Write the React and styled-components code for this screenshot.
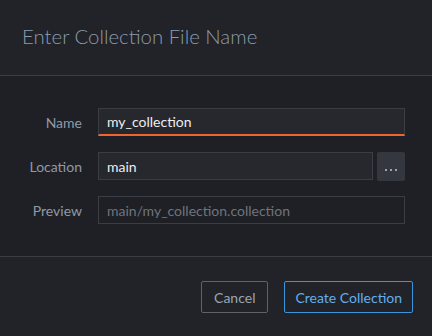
import React from "react";
import styled, { createGlobalStyle } from "styled-components";

const Global = createGlobalStyle`
  html, body { margin: 0; padding: 0; background: #1e2025; }
  body { font-family: Lato, "Noto Sans", sans-serif; }
  * { box-sizing: border-box; }
`;

const Dialog = styled.div`
  width: 432px;
  height: 336px;
  display: flex;
  flex-direction: column;
  background: #1e2025;
`;

const Header = styled.div`
  height: 76px;
  background: #212328;
  border-bottom: 1px solid #3a3d43;
  display: flex;
  align-items: center;
  padding: 0 22px;
  padding-bottom: 3px;
`;

const Title = styled.h1`
  margin: 0;
  font-weight: 300;
  font-size: 20.4px;
  color: #8b9bad;
`;

const Body = styled.div`
  flex: 1;
  display: grid;
  grid-template-columns: 82px 1fr;
  column-gap: 16px;
  row-gap: 16px;
  padding: 32px 27px 0 0;
  align-content: start;
`;

const Label = styled.label`
  font-size: 14px;
  color: #8e9aa8;
  text-align: right;
  align-self: center;
`;

const Field = styled.div`
  display: flex;
  gap: 4px;
  height: 28px;
`;

const Input = styled.div`
  flex: 1;
  height: 28px;
  display: flex;
  align-items: center;
  padding: 0 8px;
  font-size: 14px;
  background: ${(p) => (p.$readOnly ? "#1e2025" : "#26282d")};
  color: ${(p) => (p.$readOnly ? "#6f747c" : "#eceef0")};
  border: 1px solid #3a3d43;
  border-bottom: ${(p) => (p.$focused ? "2px solid #f0642e" : "1px solid #3a3d43")};
`;

const BrowseButton = styled.div`
  width: 28px;
  height: 29px;
  border-radius: 2px;
  background: #34373d;
  display: flex;
  align-items: flex-end;
  justify-content: center;
  gap: 3px;
  padding-bottom: 10px;
`;

const Dot = styled.span`
  width: 2px;
  height: 2px;
  background: #9aa3ad;
`;

const Footer = styled.div`
  height: 80px;
  background: #212328;
  border-top: 1px solid #3a3d43;
  display: flex;
  justify-content: flex-end;
  align-items: flex-start;
  gap: 16px;
  padding: 24px 19px 0 0;
`;

const Button = styled.button`
  height: 32px;
  padding: 0 ${(p) => (p.$primary ? "10px" : "12px")};
  background: transparent;
  border: 1px solid ${(p) => (p.$primary ? "#3a95e0" : "#5f6267")};
  border-radius: 2px;
  color: ${(p) => (p.$primary ? "#63aef0" : "#9aa5b1")};
  font-family: Lato, "Noto Sans", sans-serif;
  font-size: 14px;
`;

export default function App() {
  return (
    <>
      <Global />
      <Dialog>
        <Header>
          <Title>Enter Collection File Name</Title>
        </Header>
        <Body>
          <Label>Name</Label>
          <Field>
            <Input $focused>my_collection</Input>
          </Field>
          <Label>Location</Label>
          <Field>
            <Input>main</Input>
            <BrowseButton>
              <Dot />
              <Dot />
              <Dot />
            </BrowseButton>
          </Field>
          <Label>Preview</Label>
          <Field>
            <Input $readOnly>main/my_collection.collection</Input>
          </Field>
        </Body>
        <Footer>
          <Button>Cancel</Button>
          <Button $primary>Create Collection</Button>
        </Footer>
      </Dialog>
    </>
  );
}
